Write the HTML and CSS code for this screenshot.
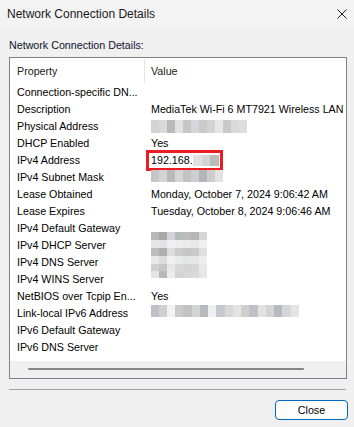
FILE: index.html
```html
<!DOCTYPE html>
<html lang="en">
<head>
  <meta charset="UTF-8" />
  <title>Network Connection Details</title>
  <link rel="stylesheet" href="styles.css">
</head>
<body>
  <!-- Title Bar -->
  <div class="titlebar">
    <span class="title">Network Connection Details</span>
    <svg class="close-x" width="10" height="10" viewBox="0 0 10 10">
      <path d="M0.5 0.5 L9.5 9.5 M9.5 0.5 L0.5 9.5" stroke="#1a1a1a" stroke-width="1" fill="none"/>
    </svg>
  </div>

  <div class="content">
    <div class="label">Network Connection Details:</div>

    <!-- List View -->
    <div class="listview">
      <div class="list-body">
        <div class="header">
          <div class="cell">Property</div>
          <div class="cell value-head">Value</div>
        </div>
        <div class="row"><div class="cell">Connection-specific DN...</div><div class="cell val"></div></div>
        <div class="row"><div class="cell">Description</div><div class="cell val">MediaTek Wi-Fi 6 MT7921 Wireless LAN</div></div>
        <div class="row"><div class="cell">Physical Address</div><div class="cell val"><span class="mosaic mac"></span></div></div>
        <div class="row"><div class="cell">DHCP Enabled</div><div class="cell val">Yes</div></div>
        <div class="row"><div class="cell">IPv4 Address</div><div class="cell val"><span class="highlight">192.168.<span class="mosaic ip-tail"></span></span></div></div>
        <div class="row"><div class="cell">IPv4 Subnet Mask</div><div class="cell val"><span class="mosaic subnet"></span></div></div>
        <div class="row"><div class="cell">Lease Obtained</div><div class="cell val">Monday, October 7, 2024 9:06:42 AM</div></div>
        <div class="row"><div class="cell">Lease Expires</div><div class="cell val">Tuesday, October 8, 2024 9:06:46 AM</div></div>
        <div class="row"><div class="cell">IPv4 Default Gateway</div><div class="cell val"><span class="mosaic servers"></span></div></div>
        <div class="row"><div class="cell">IPv4 DHCP Server</div><div class="cell val"></div></div>
        <div class="row"><div class="cell">IPv4 DNS Server</div><div class="cell val"></div></div>
        <div class="row"><div class="cell">IPv4 WINS Server</div><div class="cell val"></div></div>
        <div class="row"><div class="cell">NetBIOS over Tcpip En...</div><div class="cell val">Yes</div></div>
        <div class="row"><div class="cell">Link-local IPv6 Address</div><div class="cell val"><span class="mosaic ipv6"></span></div></div>
        <div class="row"><div class="cell">IPv6 Default Gateway</div><div class="cell val"></div></div>
        <div class="row"><div class="cell">IPv6 DNS Server</div><div class="cell val"></div></div>
      </div>
      <div class="hscroll"><div class="thumb"></div></div>
    </div>

    <div class="separator"></div>

    <div class="footer">
      <button class="btn">Close</button>
    </div>
  </div>
</body>
</html>
```

FILE: styles.css
```css
body {
  margin: 0;
  padding: 0;
  width: 354px;
  height: 427px;
  overflow: hidden;
  background: #f0f0f0;
  color: #000;
  font-family: "Liberation Sans", Arial, sans-serif;
}

.titlebar {
  height: 28px;
  display: flex;
  align-items: center;
  justify-content: space-between;
  padding: 0 7px 0 7px;
  background: #f3f3f3;
  font-size: 12px;
  color: #1a1a1a;
}

.close-x {
  margin-top: -1px;
}

.content {
  padding: 0 7px 0 9px;
  font-size: 10.7px;
}

.label {
  margin-top: 11px;
  line-height: 13px;
  color: #101030;
}

.listview {
  margin-top: 5px;
  border: 1px solid #7f8389;
  background: #fff;
}

.list-body {
  height: 303px;
}

.header,
.row {
  display: grid;
  grid-template-columns: 134px 1fr;
}

.header {
  height: 26px;
  align-items: stretch;
}

.header .cell {
  display: flex;
  align-items: center;
  color: #1a1a1a;
}

.value-head {
  border-left: 1px solid #e5e5e5;
  padding-left: 6px !important;
  margin: 1px 0 1px 0;
}

.row {
  height: 17px;
  line-height: 17px;
  align-items: center;
}

.cell {
  padding-left: 7px;
  white-space: nowrap;
  overflow: hidden;
}

.val {
  position: relative;
  overflow: visible;
}

/* pixelated redactions */
.mosaic {
  display: inline-block;
  vertical-align: middle;
}

.mac {
  width: 96px;
  height: 13px;
  margin-top: -2px;
  background: linear-gradient(to right,
    #d4d4d4 0 8px, #dadada 8px 16px, #b9b9b9 16px 24px, #e1e1e1 24px 32px,
    #c6c6c6 32px 40px, #d3d7dd 40px 48px, #cacaca 48px 56px, #d3d3d3 56px 64px,
    #e7e7e7 64px 72px, #c9c9c9 72px 80px, #d9d9d9 80px 88px, #dedede 88px 96px);
}

.subnet {
  width: 72px;
  height: 12px;
  margin-top: -4px;
  background: linear-gradient(to right,
    #c6c6c6 0 8px, #d4d4d4 8px 16px, #b9b9b9 16px 24px, #d6d6d6 24px 32px,
    #c2c2c2 32px 40px, #cdd0d0 40px 48px, #b5b5b5 48px 56px, #cdcdcd 56px 64px,
    #e3e3e3 64px 72px);
}

.ip-tail {
  width: 26px;
  height: 11px;
  margin-top: -2px;
  background: linear-gradient(to right,
    #e0e0e0 0 9px, #d4d4d4 9px 17px, #bcbcbc 17px 26px);
}

.highlight {
  display: inline-block;
  line-height: 15px;
  height: 15px;
  margin-left: -2px;
  margin-top: -3px;
  padding: 0 1px 0 2px;
  outline: 3px solid #ec1c24;
}

.servers {
  position: absolute;
  left: 7px;
  top: 3px;
  width: 56px;
  height: 46px;
  background-repeat: no-repeat;
  background-size: 100% 8px;
  background-position: 0 0, 0 8px, 0 16px, 0 24px, 0 31px, 0 38px;
  background-image:
    linear-gradient(to right, #b8b8b8 0 8px, #a8a8a8 8px 16px, #d6d2d8 16px 24px, #b4bcbc 24px 32px, #bcbcbc 32px 40px, #b6b6b6 40px 48px, #d8d4da 48px 56px),
    linear-gradient(to right, #e6e6e6 0 8px, #e2e2e2 8px 16px, #efeef0 16px 24px, #ececec 24px 32px, #eaeaea 32px 40px, #e8e8e8 40px 48px, #f0f0f0 48px 56px),
    linear-gradient(to right, #bcbcbc 0 8px, #b0b0b0 8px 16px, #dcdcdc 16px 24px, #c8cccc 24px 32px, #c6c6c6 32px 40px, #cacaca 40px 48px, #e0e0e0 48px 56px),
    linear-gradient(to right, #e8e8e8 0 8px, #dcdcdc 8px 16px, #f0f0f0 16px 24px, #e8eaea 24px 32px, #e4e4e4 32px 40px, #e6e6e6 40px 48px, #eeeeee 48px 56px),
    linear-gradient(to right, #d0d0d0 0 8px, #c6c6c6 8px 16px, #e6e6e6 16px 24px, #d8d8d8 24px 32px, #d4d4d4 32px 40px, #d6d6d6 40px 48px, #e8e8e8 48px 56px),
    linear-gradient(to right, #e4e4e4 0 8px, #b8b8b8 8px 16px, #ececec 16px 24px, #d0d4d4 24px 32px, #d8d8d8 32px 40px, #dadada 40px 48px, #e6e6e6 48px 56px);
}

.ipv6 {
  width: 148px;
  height: 12px;
  margin-top: -6px;
  background: linear-gradient(to right,
    #c0c0c8 0 8px, #d0d0d0 8px 16px, #f2f2f2 16px 24px, #cbcbcb 24px 32px,
    #c3c3c3 32px 41px, #d3d3d3 41px 49px, #b9b9c0 49px 57px, #f0f0f0 57px 65px,
    #c8c8d0 65px 74px, #d8d8d8 74px 82px, #e6e3e0 82px 90px, #d0d0d0 90px 98px,
    #c0c0c8 98px 107px, #e2e2e2 107px 115px, #d4d4d4 115px 123px, #b8b8c0 123px 131px,
    #d6d6d6 131px 140px, #e4e4e4 140px 148px);
}

.hscroll {
  height: 17px;
  background: #f0f0f0;
  padding-top: 7px;
  box-sizing: border-box;
}

.thumb {
  margin-left: 18px;
  width: 276px;
  height: 2px;
  border-radius: 1px;
  background: #868686;
}

.separator {
  margin-top: 10px;
  height: 1px;
  width: 337px;
  background: #a0a0a0;
}

.footer {
  display: flex;
  justify-content: flex-end;
  margin-top: 10px;
}

.btn {
  width: 73px;
  height: 20px;
  margin-right: -1px;
  padding: 0;
  font-family: "Liberation Sans", Arial, sans-serif;
  font-size: 10.7px;
  color: #000;
  background: #fdfdfd;
  border: 1px solid #0067c0;
  border-radius: 4px;
}
```
